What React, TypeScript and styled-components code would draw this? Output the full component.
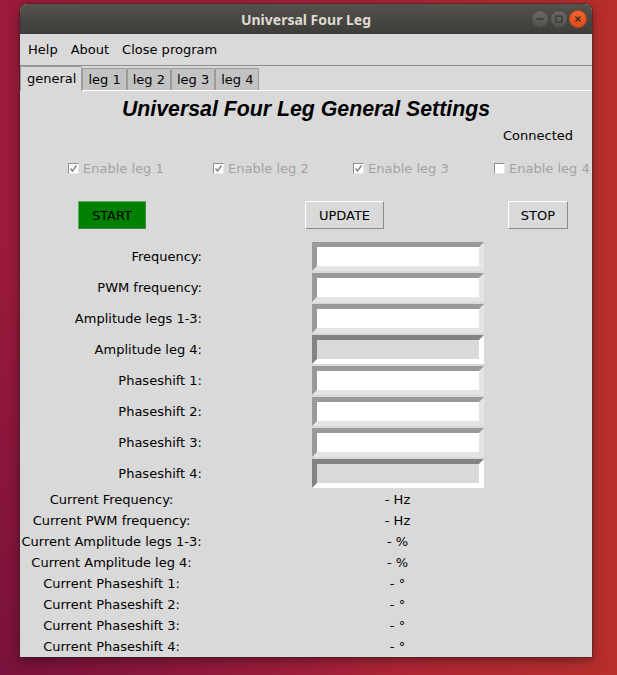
import { Fragment } from "react";
import styled, { createGlobalStyle } from "styled-components";

const GlobalStyle = createGlobalStyle`
    html, body {
        margin: 0;
        padding: 0;
    }
    body {
        width: 617px;
        height: 675px;
        overflow: hidden;
        font-family: "DejaVu Sans", sans-serif;
    }
`;

const Desktop = styled.div`
    width: 617px;
    height: 675px;
    box-sizing: border-box;
    padding: 4px 0 0 20px;
    background:
        radial-gradient(ellipse at 0% 100%, rgba(90, 10, 60, 0.55), rgba(90, 10, 60, 0) 45%),
        linear-gradient(90deg, #9c1a3b 0%, #a5203a 45%, #b72f2b 100%);
`;

const Window = styled.div`
    width: 572px;
    height: 653px;
    display: flex;
    flex-direction: column;
    background: #d9d9d9;
    border-radius: 7px 7px 0 0;
    box-shadow: 0 0 0 1px rgba(40, 40, 40, 0.45), 0 3px 12px rgba(0, 0, 0, 0.4);
    overflow: hidden;
`;

const TitleBar = styled.div`
    flex: none;
    height: 30px;
    display: grid;
    grid-template-columns: 1fr auto 1fr;
    align-items: center;
    background: linear-gradient(#55524d, #3d3c38);
    font-family: "Noto Sans", "DejaVu Sans", sans-serif;
    font-weight: bold;
    font-size: 14px;
    color: #dfdbd2;
`;

const TitleText = styled.div`
    grid-column: 2;
`;

const WindowControls = styled.div`
    grid-column: 3;
    justify-self: end;
    display: flex;
    gap: 1px;
    padding-right: 5px;
`;

const ControlButton = styled.div<{ $close?: boolean }>`
    width: 18px;
    height: 18px;
    border-radius: 50%;
    box-sizing: border-box;
    display: flex;
    align-items: center;
    justify-content: center;
    background: ${(p) => (p.$close ? "linear-gradient(#f0682f, #df4a18)" : "linear-gradient(#6a6863, #55534e)")};
    border: 1px solid ${(p) => (p.$close ? "#c2441a" : "#45443f")};
`;

const MenuBar = styled.div`
    flex: none;
    height: 32px;
    box-sizing: border-box;
    display: flex;
    align-items: center;
    padding-left: 1.5px;
    border-bottom: 1px solid #8e8e8e;
    font-size: 13px;
    color: #000;
`;

const MenuItem = styled.span`
    padding: 0 6.5px;
`;

const TabStrip = styled.div`
    flex: none;
    height: 25px;
    box-sizing: border-box;
    display: flex;
    align-items: flex-end;
    border-bottom: 1px solid #ffffff;
    font-size: 13px;
`;

const Tab = styled.div<{ $active?: boolean }>`
    box-sizing: border-box;
    height: ${(p) => (p.$active ? "25px" : "22px")};
    margin-bottom: ${(p) => (p.$active ? "-1px" : "0")};
    padding: ${(p) => (p.$active ? "0 5px 2px 6px" : "0 5px")};
    display: flex;
    align-items: center;
    background: ${(p) => (p.$active ? "#d9d9d9" : "#c3c3c3")};
    border: 1px solid #9c9c9c;
    border-bottom: none;
    border-top-right-radius: 2px;
    color: #000;
`;

const Content = styled.div`
    flex: 1;
    display: flex;
    flex-direction: column;
`;

const Heading = styled.h1`
    margin: 0;
    height: 36px;
    line-height: 36px;
    text-align: center;
    font-family: "Liberation Sans", Arial, sans-serif;
    font-style: italic;
    font-weight: bold;
    font-size: 21.3px;
    color: #000;
`;

const StatusRow = styled.div`
    height: 18px;
    line-height: 18px;
    text-align: right;
    padding-right: 19px;
    font-size: 13px;
`;

const CheckRow = styled.div`
    height: 46px;
    display: grid;
    grid-template-columns: 145px 140px 141px auto;
    align-items: center;
    padding-left: 48px;
`;

const CheckItem = styled.label`
    display: flex;
    align-items: center;
    gap: 4px;
    font-size: 13px;
    color: #a3a3a3;
    white-space: nowrap;
`;

const CheckBox = styled.span`
    width: 11px;
    height: 11px;
    box-sizing: border-box;
    display: flex;
    align-items: center;
    justify-content: center;
    background: #ffffff;
    border: 1px solid;
    border-color: #8f8f8f #e8e8e8 #e8e8e8 #8f8f8f;
`;

const ButtonRow = styled.div`
    margin-top: 10px;
    margin-bottom: 12px;
    display: grid;
    grid-template-columns: 227px 203px auto;
    padding-left: 58px;
`;

const PushButton = styled.div<{ $width: number; $green?: boolean }>`
    width: ${(p) => p.$width}px;
    height: 28px;
    box-sizing: border-box;
    display: flex;
    align-items: center;
    justify-content: center;
    font-size: 13px;
    color: #000;
    background: ${(p) => (p.$green ? "#008000" : "#d9d9d9")};
    border: 1px solid;
    border-color: ${(p) => (p.$green ? "#5fae5f #3c8a3c #3c8a3c #5fae5f" : "#ffffff #8c8c8c #8c8c8c #ffffff")};
`;

const FormGrid = styled.div`
    display: grid;
    grid-template-columns: 183px 1fr;
    grid-auto-rows: 31px;
    align-items: center;
`;

const FieldLabel = styled.div`
    text-align: right;
    padding-right: 1px;
    font-size: 13px;
    color: #000;
`;

const Entry = styled.div<{ $disabled?: boolean }>`
    justify-self: center;
    width: 172px;
    height: 29px;
    box-sizing: border-box;
    border: 5px solid;
    border-color: ${(p) =>
        p.$disabled ? "#838383 #ffffff #ffffff #838383" : "#9a9a9a #e4e4e4 #e4e4e4 #9a9a9a"};
    background: ${(p) => (p.$disabled ? "#d9d9d9" : "#ffffff")};
`;

const ReadoutGrid = styled.div`
    display: grid;
    grid-template-columns: 183px 1fr;
    grid-auto-rows: 21px;
    align-items: center;
    font-size: 13px;
    color: #000;
`;

const ReadoutLabel = styled.div`
    text-align: center;
    white-space: nowrap;
`;

const ReadoutValue = styled.div`
    text-align: center;
`;

const fields = [
    { label: "Frequency:" },
    { label: "PWM frequency:" },
    { label: "Amplitude legs 1-3:" },
    { label: "Amplitude leg 4:", disabled: true },
    { label: "Phaseshift 1:" },
    { label: "Phaseshift 2:" },
    { label: "Phaseshift 3:" },
    { label: "Phaseshift 4:", disabled: true },
];

const readouts = [
    ["Current Frequency:", "- Hz"],
    ["Current PWM frequency:", "- Hz"],
    ["Current Amplitude legs 1-3:", "- %"],
    ["Current Amplitude leg 4:", "- %"],
    ["Current Phaseshift 1:", "- °"],
    ["Current Phaseshift 2:", "- °"],
    ["Current Phaseshift 3:", "- °"],
    ["Current Phaseshift 4:", "- °"],
];

const legs = [
    { name: "Enable leg 1", checked: true },
    { name: "Enable leg 2", checked: true },
    { name: "Enable leg 3", checked: true },
    { name: "Enable leg 4", checked: false },
];

function CheckMark() {
    return (
        <svg width="9" height="9" viewBox="0 0 9 9">
            <polyline points="1.5,4.5 3.5,7 7.5,1.5" fill="none" stroke="#8a8a8a" strokeWidth="1.6" />
        </svg>
    );
}

export default function App() {
    return (
        <Desktop>
            <GlobalStyle />
            <Window>
                <TitleBar>
                    <TitleText>Universal Four Leg</TitleText>
                    <WindowControls>
                        <ControlButton>
                            <svg width="10" height="10" viewBox="0 0 10 10">
                                <line x1="1.5" y1="5" x2="8.5" y2="5" stroke="#3a3935" strokeWidth="1.5" />
                            </svg>
                        </ControlButton>
                        <ControlButton>
                            <svg width="10" height="10" viewBox="0 0 10 10">
                                <rect x="2" y="2" width="6" height="6" fill="none" stroke="#3a3935" strokeWidth="1.3" />
                            </svg>
                        </ControlButton>
                        <ControlButton $close>
                            <svg width="10" height="10" viewBox="0 0 10 10">
                                <path d="M2.5 2.5 L7.5 7.5 M7.5 2.5 L2.5 7.5" stroke="#3a2a22" strokeWidth="1.4" />
                            </svg>
                        </ControlButton>
                    </WindowControls>
                </TitleBar>
                <MenuBar>
                    <MenuItem>Help</MenuItem>
                    <MenuItem>About</MenuItem>
                    <MenuItem>Close program</MenuItem>
                </MenuBar>
                <TabStrip>
                    <Tab $active>general</Tab>
                    <Tab>leg 1</Tab>
                    <Tab>leg 2</Tab>
                    <Tab>leg 3</Tab>
                    <Tab>leg 4</Tab>
                </TabStrip>
                <Content>
                    <Heading>Universal Four Leg General Settings</Heading>
                    <StatusRow>Connected</StatusRow>
                    <CheckRow>
                        {legs.map((leg) => (
                            <CheckItem key={leg.name}>
                                <CheckBox>{leg.checked && <CheckMark />}</CheckBox>
                                {leg.name}
                            </CheckItem>
                        ))}
                    </CheckRow>
                    <ButtonRow>
                        <PushButton $width={68} $green>START</PushButton>
                        <PushButton $width={79}>UPDATE</PushButton>
                        <PushButton $width={60}>STOP</PushButton>
                    </ButtonRow>
                    <FormGrid>
                        {fields.map((f) => (
                            <Fragment key={f.label}>
                                <FieldLabel>{f.label}</FieldLabel>
                                <Entry $disabled={f.disabled} />
                            </Fragment>
                        ))}
                    </FormGrid>
                    <ReadoutGrid>
                        {readouts.map(([label, value]) => (
                            <Fragment key={label}>
                                <ReadoutLabel>{label}</ReadoutLabel>
                                <ReadoutValue>{value}</ReadoutValue>
                            </Fragment>
                        ))}
                    </ReadoutGrid>
                </Content>
            </Window>
        </Desktop>
    );
}
